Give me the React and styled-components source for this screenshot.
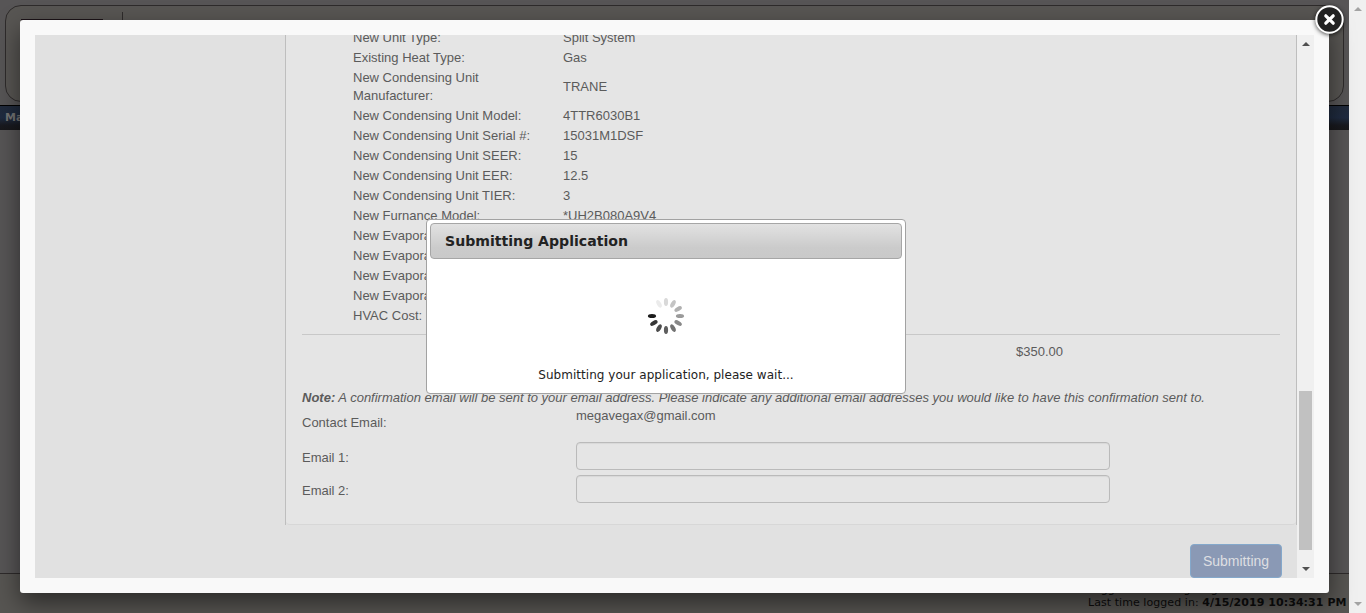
import React from "react";
import styled, { createGlobalStyle } from "styled-components";

const GlobalStyle = createGlobalStyle`
  * { box-sizing: border-box; }
  body { margin: 0; overflow: hidden; background: #555354; }
`;

const Screen = styled.div`
  position: relative;
  display: flex;
  width: 1366px;
  height: 613px;
  overflow: hidden;
  font-family: "DejaVu Sans", Verdana, sans-serif;
`;

const Page = styled.div`
  display: flex;
  flex-direction: column;
  width: 1349px;
  height: 613px;
  background: #575556;
`;

const Header = styled.header`
  height: 97px;
  margin: 5px 5px 3px;
  padding: 6px 0 0 15px;
  display: flex;
  border: 1px solid #2e2b2b;
  border-radius: 16px;
  background: #585653;
`;

const Logo = styled.div`
  width: 82px;
  height: 60px;
  margin-top: 7px;
  background: #1c1318;
`;

const Divider = styled.div`
  width: 1px;
  height: 70px;
  margin-left: 19px;
  background: #2e2b2b;
`;

const Nav = styled.nav`
  height: 25px;
  padding: 5px 0 0 5px;
  border-top: 1px solid #000;
  background: linear-gradient(#202a3b, #1f2b40 50%, #191a20 80%, #18181b);
  color: #747474;
  font-size: 11px;
  font-weight: bold;
  line-height: 13px;
`;

const PageBody = styled.div`
  flex: 1;
`;

const Footer = styled.footer`
  height: 40px;
  padding: 9px 3px 0 0;
  border-top: 1px solid #2e2b2b;
  background: #575552;
  color: #0c0c0c;
  font-size: 11px;
  line-height: 13px;
  display: flex;
  flex-direction: column;
  align-items: flex-end;
`;

const FooterLine = styled.div`
  width: 258px;
  height: 13px;
  white-space: nowrap;
  letter-spacing: 0.06px;
`;

const ScrollTrack = styled.div`
  display: flex;
  flex-direction: column;
  align-items: center;
  justify-content: space-between;
  width: 17px;
  height: 100%;
  padding: 7px 0;
  flex: none;
  background: #f0f0f0;
`;

const ScrollThumb = styled.div`
  width: 13px;
  height: 159px;
  margin: 343px 0 16px;
  background: #c1c1c1;
`;

const Arrow = styled.div`
  width: 0;
  height: 0;
  border: solid transparent;
  border-width: ${(p) => (p.$down ? "4px 4px 0" : "0 4px 4px")};
  border-${(p) => (p.$down ? "top" : "bottom")}-color: ${(p) => p.$color};
`;

const Popup = styled.section`
  position: absolute;
  left: 20px;
  top: 20px;
  width: 1309px;
  height: 573px;
  padding: 15px;
  display: flex;
  border-radius: 3px;
  background: #f9f9f9;
  box-shadow: 0 10px 25px rgba(0, 0, 0, 0.5);
`;

const Close = styled.button`
  position: absolute;
  right: -15px;
  top: -15px;
  width: 29px;
  height: 29px;
  padding: 0;
  border: 0;
  border-radius: 50%;
  background: none;
  filter: drop-shadow(0 1px 2px rgba(0, 0, 0, 0.7));
`;

const Frame = styled.main`
  display: flex;
  flex-direction: column;
  width: 1262px;
  height: 543px;
  overflow: hidden;
  background: #e1e1e1;
  font: 13px/18px "Liberation Sans", Arial, sans-serif;
  color: #5b5b5b;
`;

const Panel = styled.div`
  height: 490px;
  margin-left: 250px;
  flex: none;
  border: solid #bebebe;
  border-width: 0 1px;
  overflow: hidden;
`;

const PanelInner = styled.div`
  display: flow-root;
  height: 490px;
  padding: 0 16px;
  border-bottom: 1px solid #d7d7d7;
  border-radius: 0 0 4px 4px;
  background: #e5e5e5;
`;

const Details = styled.div`
  margin: -7px 0 0 51px;
`;

const DetailRow = styled.div`
  display: grid;
  grid-template-columns: 180px 1fr;
  column-gap: 30px;
  align-items: center;
  padding: 1px 0;
`;

const Txt = styled.span`
  white-space: pre-line;
`;

const Total = styled.div`
  height: 42px;
  margin-top: 8px;
  padding: 8px 0 0 714px;
  border-top: 1px solid #c8c8c8;
`;

const Note = styled.div`
  height: 31px;
  padding-top: 13px;
  font-style: italic;
  white-space: nowrap;
`;

const Field = styled.div`
  display: grid;
  grid-template-columns: 274px 534px;
  align-items: start;
  height: ${(p) => p.$h};
`;

const FieldLabel = styled.span`
  padding-top: 7px;
`;

const Input = styled.input`
  width: 534px;
  height: 28px;
  border: 1px solid #bababa;
  border-radius: 4px;
  background: #e5e5e5;
  box-shadow: inset 0 1px 1px rgba(0, 0, 0, 0.06);
`;

const Actions = styled.div`
  display: flex;
  justify-content: flex-end;
  padding: 19px 15px 0 0;
`;

const SubmitButton = styled.button`
  width: 92px;
  height: 34px;
  padding: 0;
  border: 1px solid #84a8cb;
  border-radius: 4px;
  background: #8a99b5;
  color: #dedfe2;
  font: 14px "Liberation Sans", Arial, sans-serif;
`;

const Dialog = styled.div`
  position: absolute;
  left: 406px;
  top: 199px;
  width: 480px;
  height: 175px;
  padding: 3px;
  display: flex;
  flex-direction: column;
  border: 1px solid #a2a2a2;
  border-radius: 4px;
  background: #fff;
  color: #222;
`;

const DialogTitle = styled.div`
  height: 36px;
  padding: 0 14px;
  border: 1px solid #a6a6a6;
  border-radius: 4px;
  background: linear-gradient(#e2e2e2, #cbcbcb 70%, #c9c9c9);
  font-size: 14.1px;
  font-weight: bold;
  line-height: 34px;
  white-space: nowrap;
`;

const DialogBody = styled.div`
  flex: 1;
  display: flex;
  flex-direction: column;
  align-items: center;
  padding-top: 38px;
  font-size: 12px;
  line-height: 16px;
  letter-spacing: 0.03px;
  white-space: nowrap;
`;

const Spinner = styled.svg`
  display: block;
  margin-bottom: 32px;
`;

const spokes = ["#d9d9d9", "#c4c4c4", "#b0b0b0", "#9a9a9a", "#888", "#727272", "#5e5e5e", "#4c4c4c", "#363636", "#1c1c1c", null, "#ebebeb"];

const details = [
  ["New Unit Type:", "Split System"],
  ["Existing Heat Type:", "Gas"],
  ["New Condensing Unit\nManufacturer:", "TRANE"],
  ["New Condensing Unit Model:", "4TTR6030B1"],
  ["New Condensing Unit Serial #:", "15031M1DSF"],
  ["New Condensing Unit SEER:", "15"],
  ["New Condensing Unit EER:", "12.5"],
  ["New Condensing Unit TIER:", "3"],
  ["New Furnance Model:", "*UH2B080A9V4"],
  ["New Evapora", ""],
  ["New Evapora", ""],
  ["New Evapora", ""],
  ["New Evapora", ""],
  ["HVAC Cost:", ""],
];

export default function App() {
  return (
    <Screen>
      <GlobalStyle />
      <Page>
        <Header>
          <Logo />
          <Divider />
        </Header>
        <Nav>Ma</Nav>
        <PageBody />
        <Footer>
          <FooterLine>Logged in as: megavegax</FooterLine>
          <FooterLine>
            Last time logged in: <b>4/15/2019 10:34:31 PM</b>
          </FooterLine>
        </Footer>
      </Page>
      <ScrollTrack>
        <Arrow $color="#a3a3a3" />
        <Arrow $down $color="#a3a3a3" />
      </ScrollTrack>
      <Popup>
        <Frame>
          <Panel>
            <PanelInner>
              <Details>
                {details.map(([label, value], i) => (
                  <DetailRow key={i}>
                    <Txt>{label}</Txt>
                    <Txt>{value}</Txt>
                  </DetailRow>
                ))}
              </Details>
              <Total>$350.00</Total>
              <Note>
                <b>Note:</b> A confirmation email will be sent to your email address. Please indicate any
                additional email addresses you would like to have this confirmation sent to.
              </Note>
              <Field $h="35px">
                <FieldLabel>Contact Email:</FieldLabel>
                <span>megavegax@gmail.com</span>
              </Field>
              <Field $h="33px">
                <FieldLabel>Email 1:</FieldLabel>
                <Input />
              </Field>
              <Field $h="33px">
                <FieldLabel>Email 2:</FieldLabel>
                <Input />
              </Field>
            </PanelInner>
          </Panel>
          <Actions>
            <SubmitButton>Submitting</SubmitButton>
          </Actions>
        </Frame>
        <ScrollTrack>
          <Arrow $color="#505050" />
          <ScrollThumb />
          <Arrow $down $color="#505050" />
        </ScrollTrack>
        <Dialog>
          <DialogTitle>Submitting Application</DialogTitle>
          <DialogBody>
            <Spinner width="38" height="38" viewBox="-19 -19 38 38">
              {spokes.map(
                (color, i) =>
                  color && (
                    <ellipse key={i} cx="0" cy="-14" rx="2.1" ry="4.1" fill={color} transform={`rotate(${i * 30})`} />
                  )
              )}
            </Spinner>
            Submitting your application, please wait...
          </DialogBody>
        </Dialog>
        <Close aria-label="Close">
          <svg width="29" height="29" viewBox="0 0 29 29">
            <circle cx="14.5" cy="14.5" r="13.2" fill="#222" stroke="#fff" strokeWidth="2" />
            <path d="M10.8 10.8 18.2 18.2M18.2 10.8 10.8 18.2" stroke="#fff" strokeWidth="3.2" strokeLinecap="round" />
          </svg>
        </Close>
      </Popup>
    </Screen>
  );
}
